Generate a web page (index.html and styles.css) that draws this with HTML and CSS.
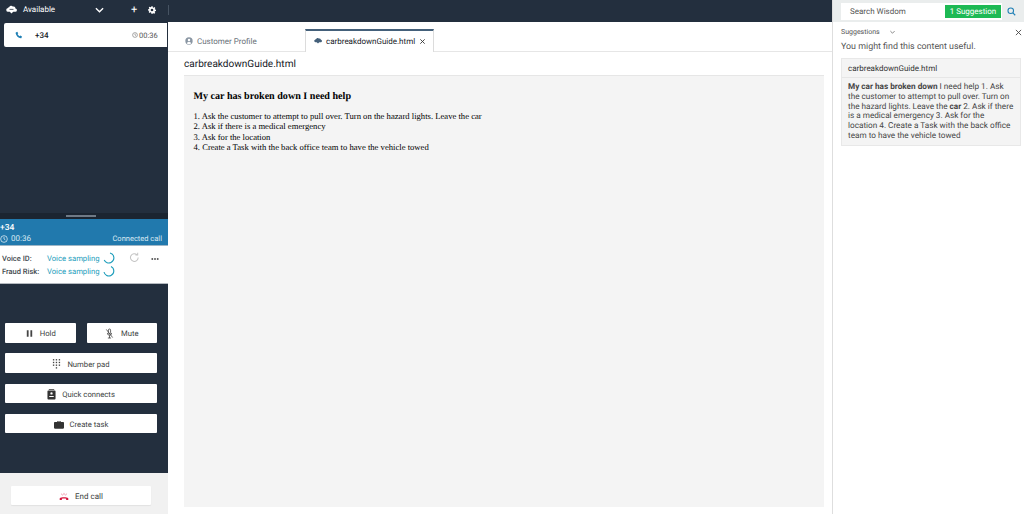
FILE: index.html
```html
<!DOCTYPE html>
<html lang="en">
<head>
  <meta charset="UTF-8" />
  <title>Agent Workspace</title>
  <link rel="stylesheet" href="styles.css">
</head>
<body>
  <div class="app">
    <aside class="ccp">
      <div class="status-bar">
        <svg class="cloud" viewBox="0 0 14 12"><path fill="#fff" d="M4 2.500a2.600 2.600 0 0 1 4.600-.8A2.400 2.400 0 0 1 12 4a2.100 2.100 0 0 1-.4 4.200H9.200L7 10.500 4.800 8.200H2.500A2.300 2.300 0 0 1 2 3.700 2.200 2.200 0 0 1 4 2.500z"/><path fill="#232f3e" d="M4.500 4.600h5v1h-5z"/></svg>
        <span class="status-name">Available</span>
        <svg class="chevron" viewBox="0 0 10 6"><path d="M1 1l4 4 4-4" fill="none" stroke="#fff" stroke-width="1.500"/></svg>
        <span class="plus">+</span>
        <svg class="gear" viewBox="0 0 24 24"><path fill="#fff" fill-rule="evenodd" d="M10 1h4l.6 3.200 1.900.8 2.700-1.800 2.800 2.800-1.800 2.700.8 1.900 3 .6v4l-3.200.6-.8 1.900 1.800 2.700-2.800 2.800-2.700-1.800-1.900.8L14 23h-4l-.6-3.200-1.900-.8-2.700 1.800-2.800-2.800 1.800-2.700-.8-1.900L0 14v-4l3.200-.6.800-1.900-1.800-2.700 2.800-2.800 2.700 1.800 1.900-.8zM12 8a4 4 0 1 0 0 8 4 4 0 0 0 0-8z"/></svg>
      </div>

      <div class="contacts">
        <div class="contact-card">
          <svg class="phone" viewBox="0 0 24 24"><path fill="#1f7fb5" d="M6.600 2l3.200 5-2.200 2.300c1.100 2.700 3.400 5 6.100 6.100l2.300-2.200 5 3.200-1.700 4.800c-.3.600-1 .8-1.700.7C9.700 20.700 3.300 14.300 1.900 6.400c-.1-.7.1-1.300.7-1.700z"/></svg>
          <span class="contact-number">+34</span>
          <span class="contact-time">
            <svg class="tiny-clock" viewBox="0 0 12 12"><circle cx="6" cy="6" r="4.800" fill="none" stroke="#555" stroke-width="1"/><path d="M6 3.200V6l2 1.200" fill="none" stroke="#555" stroke-width="1"/></svg>
            00:36
          </span>
        </div>
      </div>

      <div class="handle"><span class="grip"></span></div>

      <div class="call-banner">
        <div class="call-number">+34</div>
        <div class="call-meta">
          <span class="call-time">
            <svg class="banner-clock" viewBox="0 0 12 12"><circle cx="6" cy="6" r="5" fill="none" stroke="#fff" stroke-width="1"/><path d="M6 3v3l2 1.400" fill="none" stroke="#fff" stroke-width="1"/></svg>
            00:36
          </span>
          <span class="call-state">Connected call</span>
        </div>
      </div>

      <div class="voice-panel">
        <div class="voice-rows">
          <div class="voice-row">
            <span class="voice-label">Voice ID:</span>
            <span class="voice-value">Voice sampling</span>
            <svg class="spinner" viewBox="0 0 12 12"><path d="M7 1a5 5 0 0 1 1 9.400A5 5 0 0 1 1.200 8" fill="none" stroke="#1d9dbb" stroke-width="1.100"/></svg>
          </div>
          <div class="voice-row">
            <span class="voice-label">Fraud Risk:</span>
            <span class="voice-value">Voice sampling</span>
            <svg class="spinner" viewBox="0 0 12 12"><path d="M8 1.500a5 5 0 0 1 0 9A5 5 0 0 1 1 7" fill="none" stroke="#1d9dbb" stroke-width="1.100"/></svg>
          </div>
        </div>
        <svg class="refresh" viewBox="0 0 12 12"><path d="M10 6a4.200 4.200 0 1 1-1.300-3M9.500 .8v2.600H7" fill="none" stroke="#c4c4c4" stroke-width="1.100"/></svg>
        <svg class="more" viewBox="0 0 8 2"><path fill="#333" d="M.5 .2h1.600v1.600H.5zM3.200 .2h1.600v1.600H3.200zM5.900 .2h1.600v1.600H5.900z"/></svg>
      </div>

      <div class="controls">
        <div class="control-pair">
          <button class="control">
            <svg class="icon-sm" viewBox="0 0 10 10"><path fill="#444" d="M2 1.500h2v7H2zM6 1.500h2v7H6z"/></svg>
            Hold
          </button>
          <button class="control control-mute">
            <svg class="icon-md" viewBox="0 0 10 12"><path d="M5 1a1.200 1.200 0 0 1 1.200 1.200v3a1.200 1.200 0 0 1-2.400 0v-3A1.200 1.200 0 0 1 5 1zM2.600 5.500a2.400 2.400 0 0 0 4.800 0M5 8v3M3.200 11h3.600M1.500 1.500l7 9" fill="none" stroke="#444" stroke-width=".9"/></svg>
            Mute
          </button>
        </div>
        <button class="control">
          <svg class="icon-md" viewBox="0 0 10 12"><g fill="#444"><rect x="1" y="0" width="1.500" height="1.500"/><rect x="4.200" y="0" width="1.500" height="1.500"/><rect x="7.500" y="0" width="1.500" height="1.500"/><rect x="1" y="3" width="1.500" height="1.500"/><rect x="4.200" y="3" width="1.500" height="1.500"/><rect x="7.500" y="3" width="1.500" height="1.500"/><rect x="1" y="6" width="1.500" height="1.500"/><rect x="4.200" y="6" width="1.500" height="1.500"/><rect x="7.500" y="6" width="1.500" height="1.500"/><rect x="4.200" y="9" width="1.500" height="1.500"/></g></svg>
          Number pad
        </button>
        <button class="control">
          <svg class="icon-md" viewBox="0 0 10 12"><path fill="#333" fill-rule="evenodd" d="M1.500 1.500h7a1 1 0 0 1 1 1v8a1 1 0 0 1-1 1h-7a1 1 0 0 1-1-1v-8a1 1 0 0 1 1-1zM5 3.500a1.300 1.300 0 1 0 0 2.600 1.300 1.300 0 0 0 0-2.600zM2.500 8.800h5V7.600H2.500zM2 0h6v.8H2z"/></svg>
          Quick connects
        </button>
        <button class="control">
          <svg class="icon-lg" viewBox="0 0 12 10"><path fill="#333" d="M4 2V.8h4V2h3a1 1 0 0 1 1 1v6a1 1 0 0 1-1 1H1a1 1 0 0 1-1-1V3a1 1 0 0 1 1-1zm1 0h2v-.5H5z"/></svg>
          Create task
        </button>
      </div>

      <div class="end-area">
        <button class="end-call">
          <svg class="end-icon" viewBox="0 0 14 12"><path fill="#d5143c" d="M1 11V8.500C3 6.500 11 6.500 13 8.500V11h-3V9.300c-1.500-.5-4.500-.5-6 0V11z"/><path stroke="#e8718a" stroke-width="1" d="M7 1v3M3.500 2l1.300 2.500M10.500 2L9.200 4.500"/></svg>
          End call
        </button>
      </div>
    </aside>

    <div class="workspace">
      <div class="topbar"><span class="topbar-rule"></span></div>
      <div class="tabs">
        <div class="tab">
          <svg class="tab-icon" viewBox="0 0 12 12"><circle cx="6" cy="6" r="5.500" fill="#8a96a3"/><circle cx="6" cy="4.500" r="1.900" fill="#fff"/><path d="M2.600 9.500a3.600 3.600 0 0 1 6.800 0 4.500 4.500 0 0 1-6.800 0z" fill="#fff"/></svg>
          Customer Profile
        </div>
        <div class="tab tab-active">
          <svg class="tab-icon" viewBox="0 0 14 12"><path fill="#44607a" d="M4 2.500a2.600 2.600 0 0 1 4.600-.8A2.400 2.400 0 0 1 12 4a2.100 2.100 0 0 1-.4 4.200H9.200L7 10.500 4.800 8.200H2.500A2.300 2.300 0 0 1 2 3.700 2.200 2.200 0 0 1 4 2.500z"/></svg>
          carbreakdownGuide.html
          <svg class="tab-close" viewBox="0 0 8 8"><path d="M1.500 1.500l5 5M6.500 1.500l-5 5" fill="none" stroke="#333" stroke-width="1"/></svg>
        </div>
      </div>
      <div class="article">
        <div class="article-title">carbreakdownGuide.html</div>
        <div class="article-body">
          <h3>My car has broken down I need help</h3>
          <p>1. Ask the customer to attempt to pull over. Turn on the hazard lights. Leave the car<br>
          2. Ask if there is a medical emergency<br>
          3. Ask for the location<br>
          4. Create a Task with the back office team to have the vehicle towed</p>
        </div>
      </div>
    </div>

    <aside class="wisdom">
      <div class="search-bar">
        <div class="search-box">
          <span class="search-text">Search Wisdom</span>
          <span class="suggestion-badge">1 Suggestion</span>
        </div>
        <svg class="search-icon" viewBox="0 0 12 12"><circle cx="5" cy="5" r="3.700" fill="none" stroke="#1f7fb5" stroke-width="1.400"/><path d="M7.800 7.800l3.200 3.200" stroke="#1f7fb5" stroke-width="1.500"/></svg>
      </div>
      <div class="wisdom-body">
        <div class="wisdom-head">
          <span class="wisdom-label">Suggestions</span>
          <svg class="wisdom-chevron" viewBox="0 0 10 6"><path d="M2 1l3 3 3-3" fill="none" stroke="#555" stroke-width="1"/></svg>
          <svg class="wisdom-close" viewBox="0 0 8 8"><path d="M1 1l6 6M7 1L1 7" fill="none" stroke="#444" stroke-width="1"/></svg>
        </div>
        <div class="wisdom-note">You might find this content useful.</div>
        <div class="suggestion-card">
          <div class="suggestion-title">carbreakdownGuide.html</div>
          <div class="suggestion-text"><b>My car has broken down</b> I need help 1. Ask the customer to attempt to pull over. Turn on the hazard lights. Leave the <b>car</b> 2. Ask if there is a medical emergency 3. Ask for the location 4. Create a Task with the back office team to have the vehicle towed</div>
        </div>
      </div>
    </aside>
  </div>
</body>
</html>
```

FILE: styles.css
```css
html, body {
  height: 100%;
  margin: 0;
  padding: 0;
  overflow: hidden;
}
body {
  font-family: Roboto, "Noto Sans", sans-serif;
  color: #16191f;
  background: #fff;
  text-rendering: geometricPrecision;
}
button {
  font-family: inherit;
  text-rendering: inherit;
}
.app {
  display: flex;
  height: 514px;
}

/* left softphone column */
.ccp {
  width: 168px;
  flex: none;
  display: flex;
  flex-direction: column;
  background: #232f3e;
}
.status-bar {
  height: 22px;
  display: flex;
  align-items: center;
  padding: 0 0 3px 6px;
  box-sizing: border-box;
  color: #fff;
  font-size: 8px;
}
.cloud {
  width: 11px;
  height: 10px;
}
.status-name {
  margin-left: 6px;
  width: 72px;
}
.chevron {
  width: 9px;
  height: 6px;
}
.plus {
  margin-left: 27px;
  font-size: 11px;
}
.gear {
  width: 8px;
  height: 8px;
  margin-left: 11px;
}
.contacts {
  height: 191px;
  padding: 1px 1px 0 4px;
  box-sizing: border-box;
}
.contact-card {
  height: 24px;
  background: #fff;
  border-radius: 2px 0 0 2px;
  display: flex;
  align-items: center;
  padding-left: 11px;
  font-size: 7px;
}
.phone {
  width: 8px;
  height: 8px;
}
.contact-number {
  margin-left: 12px;
  font-size: 8px;
  font-weight: 500;
  width: 97px;
}
.contact-time {
  display: flex;
  align-items: center;
  gap: 1px;
  color: #555;
  font-size: 7.500px;
}
.tiny-clock {
  width: 6px;
  height: 6px;
}
.handle {
  height: 6px;
  background: #1b2531;
  display: flex;
  justify-content: center;
  padding-right: 6px;
}
.grip {
  width: 30px;
  height: 2px;
  margin-top: 2px;
  background: #6f7a86;
}
.call-banner {
  height: 27px;
  background: #2179ad;
  color: #fff;
  box-sizing: border-box;
  padding: 4px 6px 0 0;
  border-bottom: 1px solid #9fb6c6;
}
.call-number {
  font-size: 8.500px;
  font-weight: 500;
  line-height: 10px;
}
.call-meta {
  display: flex;
  justify-content: space-between;
  align-items: center;
  font-size: 7.500px;
  line-height: 11px;
  color: #d9e9f3;
}
.call-time {
  display: flex;
  align-items: center;
  gap: 3px;
  font-size: 8px;
}
.banner-clock {
  width: 8px;
  height: 8px;
}
.voice-panel {
  height: 38px;
  background: #fff;
  display: flex;
  align-items: flex-start;
  padding: 6px 0 0 2px;
  box-sizing: border-box;
  border-bottom: 1px solid #b5bac0;
}
.voice-rows {
  display: flex;
  flex-direction: column;
  gap: 1px;
  width: 127px;
}
.voice-row {
  display: flex;
  align-items: center;
  height: 12px;
}
.voice-label {
  width: 45px;
  font-size: 7.500px;
  font-weight: 500;
  color: #444a50;
}
.voice-value {
  font-size: 7.700px;
  color: #1d9dbb;
  width: 56px;
}
.spinner {
  width: 12px;
  height: 12px;
}
.refresh {
  width: 11px;
  height: 11px;
}
.more {
  width: 8px;
  height: 2px;
  margin: 6px 0 0 11px;
}
.controls {
  flex: 1;
  display: flex;
  flex-direction: column;
  gap: 10.800px;
  padding: 39px 11px 0 5px;
}
.control-pair {
  display: flex;
  gap: 11px;
}
.control {
  flex: 1;
  height: 19.500px;
  border: none;
  border-radius: 1px;
  background: #fff;
  color: #3c3f42;
  font-size: 7.700px;
  padding: 2px 0 0;
  display: flex;
  align-items: center;
  justify-content: center;
  gap: 6px;
}
.controls > .control {
  flex: none;
}
.control-mute {
  gap: 7px;
}
.icon-sm {
  width: 9px;
  height: 9px;
}
.icon-md {
  width: 9px;
  height: 11px;
}
.icon-lg {
  width: 10px;
  height: 9px;
}
.end-area {
  height: 41px;
  background: #f1f1f1;
  display: flex;
  align-items: flex-start;
  padding: 13px 0 0 11px;
  box-sizing: border-box;
}
.end-call {
  width: 140px;
  height: 19px;
  border: none;
  border-radius: 1px;
  background: #fff;
  color: #3c3f42;
  font-size: 8px;
  padding: 1px 0 0;
  display: flex;
  align-items: center;
  justify-content: center;
  gap: 6px;
  box-shadow: 0 1px 1px #e2e2e2;
}
.end-icon {
  width: 10px;
  height: 9px;
}

/* middle column */
.workspace {
  flex: 1;
  min-width: 0;
  display: flex;
  flex-direction: column;
}
.topbar {
  height: 22px;
  background: #232f3e;
  flex: none;
}
.topbar-rule {
  display: block;
  width: 1px;
  height: 10px;
  margin-top: 5px;
  background: #465362;
}
.tabs {
  height: 30px;
  flex: none;
  display: flex;
  align-items: flex-end;
  padding-left: 5px;
  box-sizing: border-box;
  border-bottom: 1px solid #e6e6e6;
}
.tab {
  width: 132px;
  height: 22px;
  display: flex;
  align-items: center;
  gap: 4px;
  padding: 2px 0 0 12px;
  box-sizing: border-box;
  font-size: 8px;
  color: #687078;
}
.tab-icon {
  width: 8px;
  height: 8px;
}
.tab-active {
  width: 129px;
  height: 23px;
  background: #fff;
  border: 1px solid #dcdcdc;
  border-top: 2px solid #44607a;
  border-bottom: none;
  margin-bottom: -1px;
  padding: 0 0 1px 8px;
  color: #16191f;
}
.tab-close {
  width: 7px;
  height: 7px;
}
.article {
  flex: 1;
  min-height: 0;
  padding: 0 8px 7px 16px;
  display: flex;
  flex-direction: column;
}
.article-title {
  height: 23px;
  line-height: 25px;
  font-size: 10.050px;
  flex: none;
}
.article-body {
  flex: 1;
  background: #f4f4f4;
  border-top: 1px solid #e6e6e6;
  padding: 14px 10px 0 9.500px;
  font-family: "Liberation Serif", serif;
  color: #000;
}
.article-body h3 {
  margin: 0 0 8px;
  font-size: 10.100px;
  line-height: 13px;
}
.article-body p {
  margin: 0;
  font-size: 8.650px;
  line-height: 10.300px;
}

/* right column */
.wisdom {
  width: 192px;
  flex: none;
  display: flex;
  flex-direction: column;
  border-left: 1px solid #dedede;
  box-sizing: border-box;
}
.search-bar {
  height: 22px;
  flex: none;
  background: #eaeded;
  display: flex;
  align-items: center;
  padding: 0 0 0 8px;
  box-sizing: border-box;
}
.search-box {
  width: 161px;
  height: 17px;
  background: #fff;
  display: flex;
  align-items: center;
  justify-content: space-between;
  box-sizing: border-box;
  padding: 0 1px 0 9px;
}
.search-text {
  font-size: 8px;
  color: #555;
}
.suggestion-badge {
  height: 13px;
  line-height: 13px;
  width: 56px;
  text-align: center;
  background: #1db954;
  color: #fff;
  font-size: 8px;
}
.search-icon {
  width: 9px;
  height: 9px;
  margin-left: 5px;
}
.wisdom-body {
  padding: 0 2px 0 8px;
}
.wisdom-head {
  display: flex;
  align-items: center;
  height: 20px;
}
.wisdom-label {
  font-size: 7px;
  color: #555;
  width: 48px;
}
.wisdom-chevron {
  width: 7px;
  height: 5px;
}
.wisdom-close {
  margin-left: auto;
  width: 7px;
  height: 7px;
}
.wisdom-note {
  font-size: 8.900px;
  line-height: 11px;
  color: #555;
}
.suggestion-card {
  width: 180px;
  margin-top: 5px;
  background: #f4f4f4;
  border: 1px solid #e8e8e8;
  box-sizing: border-box;
}
.suggestion-title {
  height: 18px;
  line-height: 20px;
  padding-left: 6px;
  font-size: 8px;
  border-bottom: 1px solid #e6e6e6;
  color: #333;
}
.suggestion-text {
  padding: 5px 6px 3px 6px;
  font-size: 8.200px;
  line-height: 9.800px;
  color: #444;
}
```
